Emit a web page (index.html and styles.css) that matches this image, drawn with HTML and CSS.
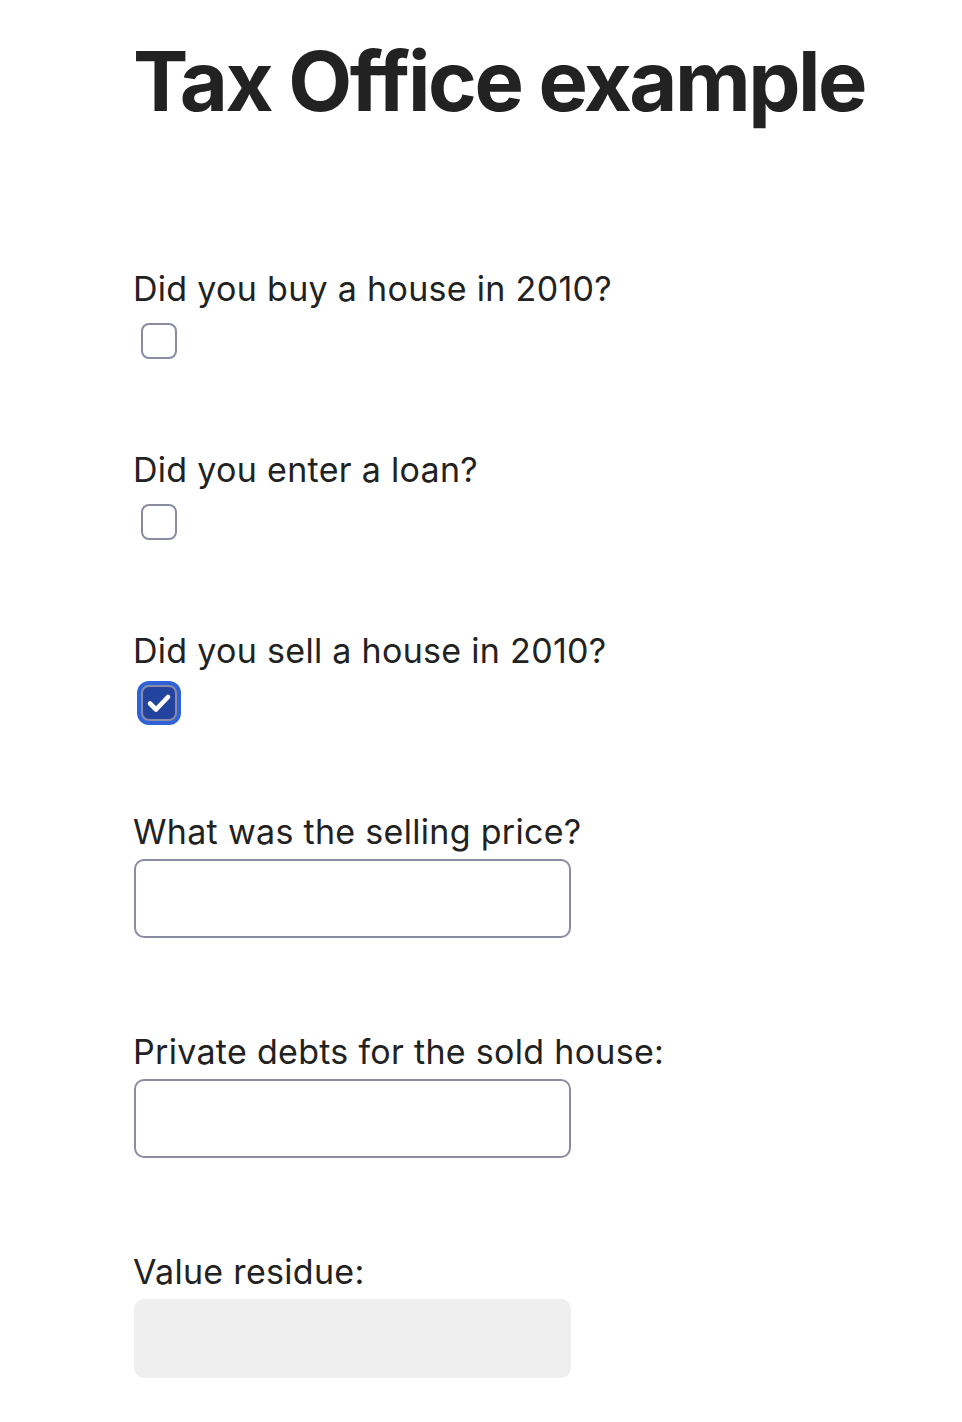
FILE: index.html
```html
<!DOCTYPE html>
<html lang="en">
<head>
<meta charset="utf-8">
<title>Tax Office example</title>
<link rel="stylesheet" href="styles.css">
</head>
<body>
<main class="page">
  <h1 class="title">Tax Office example</h1>
  <form class="form">
    <div class="field field-check">
      <label class="label" for="buy">Did you buy a house in 2010?</label>
      <span class="check"><input type="checkbox" id="buy" class="checkbox"></span>
    </div>
    <div class="field field-check">
      <label class="label" for="loan">Did you enter a loan?</label>
      <span class="check"><input type="checkbox" id="loan" class="checkbox"></span>
    </div>
    <div class="field field-check">
      <label class="label" for="sell">Did you sell a house in 2010?</label>
      <span class="check check-on"><input type="checkbox" id="sell" class="checkbox" checked>
        <svg class="tick" viewBox="0 0 36 36" width="36" height="36" aria-hidden="true"><path d="M9 18.5 L15 24.5 L27 12" fill="none" stroke="#fff" stroke-width="4.6" stroke-linecap="round" stroke-linejoin="round"/></svg>
      </span>
    </div>
    <div class="field">
      <label class="label" for="price">What was the selling price?</label>
      <input type="text" id="price" class="text-input">
    </div>
    <div class="field">
      <label class="label" for="debts">Private debts for the sold house:</label>
      <input type="text" id="debts" class="text-input">
    </div>
    <div class="field">
      <label class="label" for="residue">Value residue:</label>
      <input type="text" id="residue" class="text-input" disabled>
    </div>
  </form>
</main>
</body>
</html>
```
FILE: styles.css
```css
html, body {
  margin: 0;
  padding: 0;
  background: #fff;
}
body {
  font-family: Inter, "Liberation Sans", sans-serif;
  color: #222;
}
.page {
  padding: 0 0 0 133px;
}
.title {
  margin: 0;
  padding-top: 31px;
  font-size: 83px;
  line-height: 100px;
  font-weight: 700;
  letter-spacing: -2.5px;
  color: #222;
}
.form {
  display: flex;
  flex-direction: column;
  padding-top: 138px;
}
.field {
  display: flex;
  flex-direction: column;
  align-items: flex-start;
}
.field-check {
  margin-bottom: 87px;
}
.label {
  display: block;
  font-size: 34px;
  line-height: 40px;
  letter-spacing: 0.3px;
  color: #222;
}
.check {
  position: relative;
  display: inline-block;
  width: 36px;
  height: 36px;
  margin: 14px 0 4px 8px;
}
.checkbox {
  appearance: none;
  -webkit-appearance: none;
  display: block;
  box-sizing: border-box;
  width: 36px;
  height: 36px;
  margin: 0;
  border: 2px solid #8b8ba4;
  border-radius: 8px;
  background: #fff;
}
.check-on .checkbox {
  background: #23449e;
  border-color: #8b8ba4;
  box-shadow: 0 0 0 4px #2e62d6;
}
.tick {
  position: absolute;
  left: 0;
  top: 0;
}
.text-input {
  box-sizing: border-box;
  width: 437px;
  height: 79px;
  margin: 7px 0 94px 1px;
  border: 2px solid #8b8ba4;
  border-radius: 10px;
  background: #fff;
  font: inherit;
  font-size: 32px;
  padding: 0 14px;
}
.text-input:disabled {
  border-color: #efefef;
  background: #efefef;
}
```
